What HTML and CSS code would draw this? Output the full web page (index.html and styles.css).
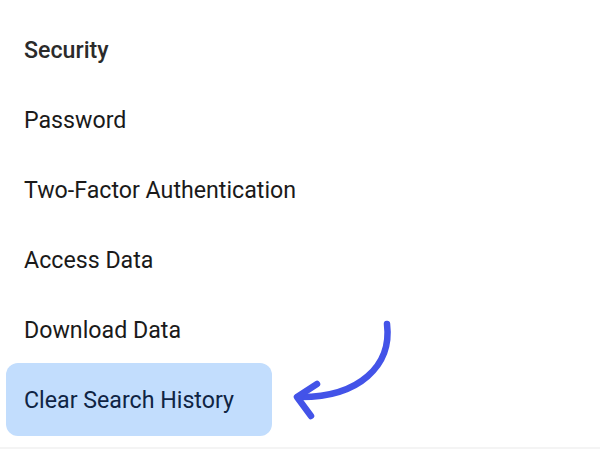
FILE: index.html
```html
<!DOCTYPE html>
<html>
<head>
<meta charset="utf-8">
<link rel="stylesheet" href="styles.css">
</head>
<body>
<div class="page">
  <ul class="menu">
    <li class="item title">Security</li>
    <li class="item">Password</li>
    <li class="item">Two-Factor Authentication</li>
    <li class="item">Access Data</li>
    <li class="item">Download Data</li>
    <li class="item active">Clear Search History</li>
  </ul>
  <div class="divider"></div>
  <svg class="arrow" width="600" height="450" viewBox="0 0 600 450">
    <path d="M387 324 C 392 365, 360 398, 298 397" fill="none" stroke="#4353e8" stroke-width="6.5" stroke-linecap="round"/>
    <path d="M317 384 L 297 397 L 311 416" fill="none" stroke="#4353e8" stroke-width="6.5" stroke-linecap="round" stroke-linejoin="round"/>
  </svg>
</div>
</body>
</html>
```
FILE: styles.css
```css
html, body {
  margin: 0;
  padding: 0;
  background: #ffffff;
}
.page {
  width: 600px;
  height: 450px;
  overflow: hidden;
  position: relative;
  font-family: Roboto, "Liberation Sans", sans-serif;
}
.menu {
  list-style: none;
  margin: 0;
  padding: 15px 0 0 6px;
  display: flex;
  flex-direction: column;
}
.item {
  height: 70px;
  display: flex;
  align-items: center;
  padding-left: 18px;
  font-size: 23.2px;
  color: #1a1a1a;
  width: 248px;
  white-space: nowrap;
}
.title {
  font-weight: 500;
  color: #2b2b2b;
}
.active {
  height: 73px;
  margin-top: -2px;
  background: #c2ddfd;
  color: #0f2444;
  border-radius: 12px;
}
.divider {
  margin-top: 11px;
  height: 2px;
  background: #f4f4f4;
}
.arrow {
  position: absolute;
  left: 0;
  top: 0;
}
```
